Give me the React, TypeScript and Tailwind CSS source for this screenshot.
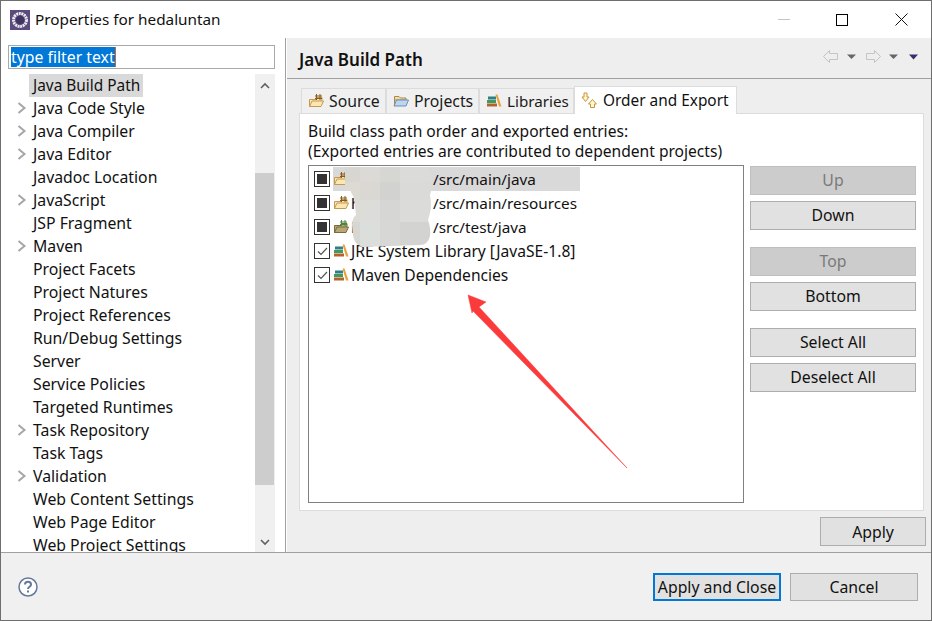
import React from "react";

const font = { fontFamily: '"Noto Sans", "Open Sans", sans-serif' };

const tree: [string, boolean][] = [
  ["Java Code Style", true],
  ["Java Compiler", true],
  ["Java Editor", true],
  ["Javadoc Location", false],
  ["JavaScript", true],
  ["JSP Fragment", false],
  ["Maven", true],
  ["Project Facets", false],
  ["Project Natures", false],
  ["Project References", false],
  ["Run/Debug Settings", false],
  ["Server", false],
  ["Service Policies", false],
  ["Targeted Runtimes", false],
  ["Task Repository", true],
  ["Task Tags", false],
  ["Validation", true],
  ["Web Content Settings", false],
  ["Web Page Editor", false],
  ["Web Project Settings", false],
];

function Chevron() {
  return (
    <svg width="10" height="12" viewBox="0 0 10 12" className="absolute left-[9px] top-[5px]">
      <path d="M1.5 1 L7.5 6 L1.5 11" fill="none" stroke="#a6a6a6" strokeWidth="2" />
    </svg>
  );
}

function PackageIcon({ tint = "#fde6b0", edge = "#c29a55", grid = "#8a5a1c" }: { tint?: string; edge?: string; grid?: string }) {
  return (
    <svg width="16" height="16" viewBox="0 0 16 16" className="shrink-0">
      <path d="M1.5 13.5 V6.5 H8 V4.5 H14 V7.5 H13.5 L12 13.5 Z" fill={tint} stroke={edge} />
      <path d="M1.5 13.5 L4 8 H15.5 L13 13.5 Z" fill={tint} stroke={edge} />
      <path d="M7 3 H14 M7 5.5 H14 M8.5 1 V7 M12 1 V7" stroke={grid} strokeWidth="1" fill="none" />
    </svg>
  );
}

function FolderIcon() {
  return (
    <svg width="16" height="16" viewBox="0 0 16 16" className="shrink-0">
      <path d="M1.5 3.5 H6 L7.5 5 H13 V7 H1.5 Z" fill="#f3dca0" stroke="#a58a52" />
      <path d="M1 13 L3.5 7 H15.5 L13 13 Z" fill="#bcd6f2" stroke="#6f8db5" />
      <path d="M1.5 7 V13" stroke="#a58a52" />
    </svg>
  );
}

function LibIcon() {
  return (
    <svg width="16" height="16" viewBox="0 0 16 16" className="shrink-0">
      <rect x="2" y="3.5" width="8" height="3" fill="#2f7f86" />
      <rect x="1" y="7" width="9" height="3" fill="#3f9a5c" />
      <rect x="1" y="10.5" width="10" height="3" fill="#b5622e" />
      <path d="M9.5 1.5 L11.5 1.5 L15.5 13.5 L13 13.5 Z" fill="#e8a33c" />
    </svg>
  );
}

function OrderIcon() {
  return (
    <svg width="17" height="17" viewBox="0 0 17 17" className="shrink-0">
      <path d="M3 1 H6 V5 H8 L4.5 9.5 L1 5 H3 Z" fill="#fff6cf" stroke="#c8963c" />
      <path d="M11.5 7.5 L15.5 12 H13.5 V15.5 H9.5 V12 H7.5 Z" fill="#fff6cf" stroke="#c8963c" />
    </svg>
  );
}

function Tab({ icon, label, w, cls = "" }: { icon: React.ReactNode; label: string; w: string; cls?: string }) {
  return (
    <div className={`${w} h-[25px] flex items-center gap-[5px] pl-[6px] bg-[#f0f0f0] border border-b-0 border-[#dcdcdc]`}>
      {icon}
      <span className={`text-[#1a1a1a] ${cls}`}>{label}</span>
    </div>
  );
}

function Btn({ label, cls = "", disabled = false }: { label: string; cls?: string; disabled?: boolean }) {
  return (
    <div
      className={`h-[29px] flex items-center justify-center border ${
        disabled ? "bg-[#cccccc] border-[#bfbfbf] text-[#7a7a7a]" : "bg-[#e1e1e1] border-[#adadad] text-[#111]"
      } ${cls}`}
    >
      {label}
    </div>
  );
}

function Check({ on }: { on: boolean }) {
  return (
    <div className="w-[16px] h-[16px] border border-[#333] bg-white flex items-center justify-center shrink-0">
      {on ? (
        <svg width="13" height="13" viewBox="0 0 13 13">
          <path d="M2 6.5 L5 9.5 L11 3" fill="none" stroke="#555" strokeWidth="1.2" />
        </svg>
      ) : (
        <div className="w-[10px] h-[10px] bg-[#333]" />
      )}
    </div>
  );
}

function Row({ on, icon, text, name = false, selected = false }: { on: boolean; icon: React.ReactNode; text: string; name?: boolean; selected?: boolean }) {
  return (
    <div className="h-[24px] flex items-center pl-[5px]">
      <Check on={on} />
      <div className={`flex items-center h-[24px] ml-[3px] ${selected ? "bg-[#d9d9d9] w-[247px]" : ""}`}>
        {icon}
        <span className={`ml-[2px] whitespace-pre text-[#111] ${name ? "text-[15.3px]" : "text-[15.6px]"}`}>
          {name && <span className="inline-block w-[82px]">h</span>}
          {text}
        </span>
      </div>
    </div>
  );
}

const mosaic: [number, number, number, number, string][] = [
  [340, 160, 20, 22, "#d7d6d1"],
  [360, 160, 20, 22, "#dbdad6"],
  [380, 160, 20, 22, "#d6d6d3"],
  [400, 160, 35, 22, "#dbdbd9"],
  [340, 182, 20, 18, "#dcdad2"],
  [360, 182, 20, 18, "#d9d8d3"],
  [380, 182, 20, 18, "#d2d3d0"],
  [400, 182, 35, 18, "#dadad8"],
  [340, 200, 20, 22, "#dedbd5"],
  [360, 200, 20, 22, "#dcddd8"],
  [380, 200, 20, 22, "#d6d7d4"],
  [400, 200, 35, 22, "#dbdbda"],
  [340, 222, 20, 28, "#d6d6d2"],
  [360, 222, 20, 28, "#dbdedb"],
  [380, 222, 20, 28, "#d7d8d6"],
  [400, 222, 35, 28, "#d3d4d2"],
];

export default function App() {
  return (
    <div style={font} className="relative w-[932px] h-[621px] flex flex-col bg-white border border-[#6e6e6e] overflow-hidden text-[15.8px] leading-[23px] text-[#111]">
      {/* Title bar */}
      <div className="h-[37px] flex items-center pl-[9px] shrink-0">
        <svg width="20" height="20" viewBox="0 0 20 20" className="shrink-0">
          <rect width="20" height="20" fill="#5a4a7e" />
          <circle cx="10" cy="10" r="6.5" fill="none" stroke="#e9e9ee" strokeWidth="3" strokeDasharray="2 0.6" />
          <circle cx="10" cy="10" r="4" fill="#3d3560" />
        </svg>
        <span className="ml-[5px] text-[15.3px]">Properties for hedaluntan</span>
        <div className="ml-auto flex items-center">
          <div className="w-[54px] flex justify-center"><div className="w-[12px] h-px bg-[#c4c4c4]" /></div>
          <div className="w-[62px] flex justify-center"><div className="w-[12px] h-[12px] border border-black" /></div>
          <div className="w-[58px] flex justify-center pr-[2px]">
            <svg width="13" height="13" viewBox="0 0 13 13"><path d="M0.5 0.5 L12.5 12.5 M12.5 0.5 L0.5 12.5" stroke="#111" /></svg>
          </div>
        </div>
      </div>

      {/* Main */}
      <div className="flex-1 flex min-h-0">
        {/* Left */}
        <div className="w-[284px] shrink-0 flex flex-col pt-[7px] pl-[7px] pr-[10px] min-h-0">
          <div className="h-[24px] border border-[#a9a9a9] flex items-center pl-[2px] shrink-0">
            <span className="bg-[#0078d7] text-white h-[20px] leading-[20px] border-r border-[#c86a2a] whitespace-nowrap">type filter text</span>
          </div>
          <div className="flex-1 flex min-h-0 mt-[5px]">
            <div className="flex-1 overflow-hidden relative">
              <div className="h-[23px] relative">
                <span className="absolute left-[21px] top-0 h-[23px] w-[114px] bg-[#d9d9d9]" />
                <span className="absolute left-[25px] top-0 text-[15.4px]">Java Build Path</span>
              </div>
              {tree.map(([t, c]) => (
                <div key={t} className="h-[23px] relative pl-[25px] whitespace-nowrap">
                  {c && <Chevron />}
                  {t}
                </div>
              ))}
            </div>
            <div className="w-[20px] bg-[#f0f0f0] flex flex-col items-center shrink-0">
              <div className="h-[22px] flex items-center justify-center">
                <svg width="10" height="7" viewBox="0 0 10 7"><path d="M1 6 L5 2 L9 6" fill="none" stroke="#606060" strokeWidth="1.6" /></svg>
              </div>
              <div className="h-[77px]" />
              <div className="w-[19px] h-[312px] -ml-px bg-[#cdcdcd]" />
              <div className="flex-1 flex items-end pb-[6px]">
                <svg width="10" height="7" viewBox="0 0 10 7"><path d="M1 1 L5 5 L9 1" fill="none" stroke="#606060" strokeWidth="1.6" /></svg>
              </div>
            </div>
          </div>
        </div>

        {/* Right */}
        <div className="flex-1 flex flex-col border-l border-[#a0a0a0] pl-px min-w-0">
          <div className="h-[41px] bg-[#eeeeee] border-b border-[#a0a0a0] flex items-center pl-[12px] shrink-0">
            <span className="font-semibold text-[17px] pt-[3px]">Java Build Path</span>
            <svg width="100" height="13" viewBox="0 0 100 13" className="ml-auto mr-[8px] mb-[4px]">
              <path d="M0.5 6.5 L6.5 0.5 V3.5 H14.5 V9.5 H6.5 V12.5 Z" fill="none" stroke="#c4c4c4" />
              <path d="M24 4.5 H33 L28.5 9 Z" fill="#666" />
              <path d="M57.5 6.5 L51.5 0.5 V3.5 H43.5 V9.5 H51.5 V12.5 Z" fill="none" stroke="#c4c4c4" />
              <path d="M66 4.5 H75 L70.5 9 Z" fill="#666" />
              <path d="M86 4.5 H95 L90.5 9.5 Z" fill="#3c2a70" />
            </svg>
          </div>
          <div className="flex-1 bg-[#eeeeee] flex flex-col pl-[12px] pr-[7px] min-h-0">
            <div className="flex items-end pl-[2px] pt-[6px] h-[34px] shrink-0">
              <Tab w="w-[85px]" icon={<PackageIcon />} label="Source" />
              <Tab w="w-[93px]" icon={<FolderIcon />} label="Projects" />
              <Tab w="w-[95px]" icon={<LibIcon />} label="Libraries" cls="text-[15.2px]" />
              <div className="w-[163px] h-[28px] -mb-px relative flex items-center gap-[5px] pl-[6px] bg-white border border-b-0 border-[#dcdcdc]">
                <OrderIcon />
                <span className="text-[15.4px]">Order and Export</span>
              </div>
            </div>
            <div className="h-[398px] bg-white border border-[#dcdcdc] pl-[8px] pr-[7px] pt-[7px] shrink-0 flex flex-col">
              <div className="leading-[20px] h-[40px] text-[15.6px] whitespace-nowrap">
                Build class path order and exported entries:
                <br />
                (Exported entries are contributed to dependent projects)
              </div>
              <div className="flex flex-1 gap-[6px] mt-[4px] pb-[7px] min-h-0">
                <div className="flex-1 border border-[#808080] pt-px">
                  <Row on={false} selected name icon={<PackageIcon />} text="/src/main/java" />
                  <Row on={false} name icon={<PackageIcon />} text="/src/main/resources" />
                  <Row on={false} name icon={<PackageIcon tint="#b8a878" edge="#7c6a3a" grid="#3f8f3f" />} text="/src/test/java" />
                  <Row on icon={<LibIcon />} text="JRE System Library [JavaSE-1.8]" />
                  <Row on icon={<LibIcon />} text="Maven Dependencies" />
                </div>
                <div className="w-[166px] shrink-0 flex flex-col pt-px">
                  <Btn label="Up" disabled />
                  <Btn label="Down" cls="mt-[6px]" />
                  <Btn label="Top" disabled cls="mt-[17px]" />
                  <Btn label="Bottom" cls="mt-[6px]" />
                  <Btn label="Select All" cls="mt-[17px]" />
                  <Btn label="Deselect All" cls="mt-[6px]" />
                </div>
              </div>
            </div>
            <div className="flex justify-end pt-[6px] -mr-[2px]">
              <Btn label="Apply" cls="w-[106px] pt-px" />
            </div>
          </div>
        </div>
      </div>

      {/* Footer */}
      <div className="h-[68px] shrink-0 bg-[#f0f0f0] border-t border-[#a0a0a0] flex items-center pl-[17px] pr-[13px]">
        <svg width="20" height="20" viewBox="0 0 20 20">
          <circle cx="10" cy="10" r="9" fill="#fff" stroke="#64789a" strokeWidth="1.5" />
          <path d="M7 7.5 C7 3.8 13 3.8 13 7.5 C13 10 10 9.5 10 12" fill="none" stroke="#64789a" strokeWidth="2" />
          <rect x="9" y="13.5" width="2" height="2" fill="#64789a" />
        </svg>
        <div className="ml-auto flex gap-[9px]">
          <div className="w-[128px] h-[28px] border-2 border-[#0078d7] bg-[#e1e1e1] flex items-center justify-center whitespace-nowrap pt-px">Apply and Close</div>
          <div className="w-[128px] h-[28px] border border-[#adadad] bg-[#e1e1e1] flex items-center justify-center pt-px">Cancel</div>
        </div>
      </div>

      {/* Annotations painted over the screenshot: mosaic blur and red arrow */}
      <svg width="932" height="621" viewBox="0 0 932 621" className="absolute -left-px -top-px pointer-events-none">
        <defs>
          <clipPath id="blur">
            <path d="M345 167 H424 Q431 168 432 180 Q432 190 430 195 Q432 205 430 213 L428 220 Q431 228 430 236 Q428 245 420 245 L362 247 Q354 244 353 235 L352 225 Q352 218 356 215 L354 198 L350 190 L345 190 Z" />
          </clipPath>
        </defs>
        <g clipPath="url(#blur)">
          {mosaic.map(([x, y, w, h, c]) => (
            <rect key={`${x}-${y}`} x={x} y={y} width={w} height={h} fill={c} />
          ))}
        </g>
        <path d="M468 295 L486 302 L479 307 L627 468 L473 311 L472 313 Z" fill="#fb3b3b" stroke="#fb3b3b" strokeWidth="0.5" />
      </svg>
    </div>
  );
}
